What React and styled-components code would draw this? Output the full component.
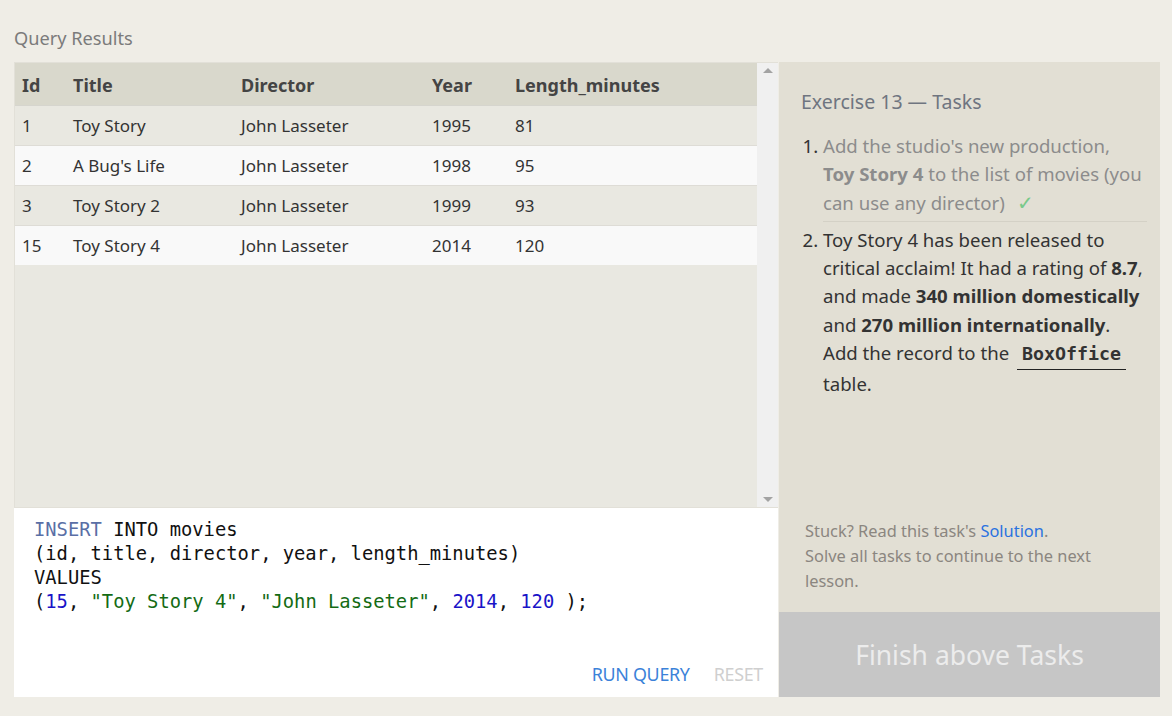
import React from 'react'
import styled, { createGlobalStyle } from 'styled-components'

const Global = createGlobalStyle`
  body{
    margin: 0;
    background: #efede6;
    font-family: "Noto Sans", "Open Sans", sans-serif;
  }
`;

const Page = styled.div`
  width: 1146px;
  padding: 26px 12px 0 14px;
  .heading{
    font-size: 18.2px;
    color: #7b7b7b;
    height: 36px;
    line-height: 24px;
  }
`;

const Main = styled.div`
  display: grid;
  grid-template-columns: 764px 381px;
  gap: 1px;
  height: 635px;
  box-shadow: 0 1px 0 #e4e2da;
`;

const Left = styled.div`
  display: flex;
  flex-direction: column;
`;

const Results = styled.div`
  height: 444px;
  display: flex;
  background: #e9e8e1;
  border: 1px solid #e2e0d8;
  border-right: none;
`;

const Table = styled.table`
  flex: 1;
  align-self: flex-start;
  border-collapse: collapse;
  font-size: 17px;
  color: #333;
  th{
    background: #d9d8cc;
    color: #444;
    font-weight: 700;
    text-align: left;
    height: 40px;
    padding: 2px 7px 0;
    font-size: 18px;
  }
  td{
    height: 39px;
    padding: 0 7px;
    border-top: 1px solid #dedcd6;
  }
  tbody tr:nth-child(even) td{ background: #f9f9f9; }
  tbody tr:first-child td{ border-top: 1px solid #d6d5ce; }
`;

const Scroll = styled.div`
  width: 21px;
  background: #f0f0f0;
  display: flex;
  flex-direction: column;
  justify-content: space-between;
  align-items: center;
  padding: 5px 0;
`;

const Arrow = styled.div`
  width: 0;
  height: 0;
  border-left: 5px solid transparent;
  border-right: 5px solid transparent;
  ${p => p.down ? 'border-top: 5px solid #a3a3a3;' : 'border-bottom: 5px solid #a3a3a3;'}
`;

const Editor = styled.div`
  flex: 1;
  background: #fff;
  display: flex;
  flex-direction: column;
  justify-content: space-between;
  padding: 10px 0 0 20px;
  pre{
    margin: 0;
    font-family: "DejaVu Sans Mono", "Liberation Mono", monospace;
    font-size: 18.8px;
    line-height: 24px;
    color: #111;
  }
  .kw{ color: #5a6fa6; }
  .num{ color: #1a14c8; }
  .str{ color: #146b14; }
`;

const Actions = styled.div`
  display: flex;
  justify-content: flex-end;
  gap: 24px;
  padding: 0 15px 11px 0;
`;

const ActionButton = styled.span`
  font-size: 17.9px;
  color: ${p => p.disabled ? '#cfcfcf' : '#3b82d9'};
  letter-spacing: -0.3px;
`;

const Right = styled.div`
  display: flex;
  flex-direction: column;
  background: #e2dfd4;
`;

const Tasks = styled.div`
  flex: 1;
  padding: 27px 13px 0 22px;
  h3{
    margin: 0 0 17px 0;
    font-weight: 400;
    font-size: 19.5px;
    line-height: 26px;
    color: #6f7580;
  }
  ol{
    margin: 0;
    padding-left: 22px;
  }
`;

const Task = styled.li`
  font-size: 18.6px;
  line-height: 28.3px;
  color: ${p => p.done ? '#8c8c8c' : '#333'};
  padding: ${p => p.done ? '0 0 4px' : '4px 0 0'};
  border-bottom: ${p => p.done ? '1px solid #d4d1c6' : 'none'};
  &::marker{ color: #333; }
  b{ font-weight: 700; }
  .nowrap{ white-space: nowrap; }
  .check{ color: #79c98a; margin-left: 12px; font-size: 20px; }
  code{
    display: inline-block;
    line-height: 26px;
    font-family: "DejaVu Sans Mono", "Liberation Mono", monospace;
    font-weight: 700;
    font-size: 18.3px;
    color: #333;
    border-bottom: 1px solid #222;
    padding: 0 5px 2px;
    margin-left: 3px;
  }
`;

const Help = styled.div`
  padding: 0 30px 19px 26px;
  font-size: 16.4px;
  line-height: 25px;
  color: #8b8680;
  a{ color: #2a72e0; text-decoration: none; }
`;

const Finish = styled.div`
  height: 85px;
  background: #c6c6c6;
  color: #ececec;
  font-size: 26.5px;
  display: flex;
  align-items: center;
  justify-content: center;
`;

const rows = [
  [1, 'Toy Story', 'John Lasseter', 1995, 81],
  [2, "A Bug's Life", 'John Lasseter', 1998, 95],
  [3, 'Toy Story 2', 'John Lasseter', 1999, 93],
  [15, 'Toy Story 4', 'John Lasseter', 2014, 120],
]

const App = () => {
  return (
    <Page>
      <Global />
      <div className='heading'>Query Results</div>
      <Main>
        <Left>
          <Results>
            <Table>
              <colgroup>
                <col style={{ width: 51 }} />
                <col style={{ width: 168 }} />
                <col style={{ width: 191 }} />
                <col style={{ width: 83 }} />
                <col />
              </colgroup>
              <thead>
                <tr><th>Id</th><th>Title</th><th>Director</th><th>Year</th><th>Length_minutes</th></tr>
              </thead>
              <tbody>
                {rows.map(r => (
                  <tr key={r[0]}>{r.map((c, i) => <td key={i}>{c}</td>)}</tr>
                ))}
              </tbody>
            </Table>
            <Scroll><Arrow /><Arrow down /></Scroll>
          </Results>
          <Editor>
            <pre>
<span className='kw'>INSERT</span> INTO movies{'\n'}
(id, title, director, year, length_minutes){'\n'}
VALUES{'\n'}
(<span className='num'>15</span>, <span className='str'>"Toy Story 4"</span>, <span className='str'>"John Lasseter"</span>, <span className='num'>2014</span>, <span className='num'>120</span> );
            </pre>
            <Actions>
              <ActionButton>RUN QUERY</ActionButton>
              <ActionButton disabled>RESET</ActionButton>
            </Actions>
          </Editor>
        </Left>
        <Right>
          <Tasks>
            <h3>Exercise 13 — Tasks</h3>
            <ol>
              <Task done>Add the studio's new production, <b className='nowrap'>Toy Story 4</b> to the list of movies (you can use any director)<span className='check'>✓</span></Task>
              <Task>Toy Story 4 has been released to critical acclaim! It had a rating of <b>8.7</b>, and made <b>340 million domestically</b> and <b>270 million internationally</b>. Add the record to the <code>BoxOffice</code> table.</Task>
            </ol>
          </Tasks>
          <Help>
            Stuck? Read this task's <a href='#'>Solution</a>.<br />
            Solve all tasks to continue to the next lesson.
          </Help>
          <Finish>Finish above Tasks</Finish>
        </Right>
      </Main>
    </Page>
  )
}

export default App
